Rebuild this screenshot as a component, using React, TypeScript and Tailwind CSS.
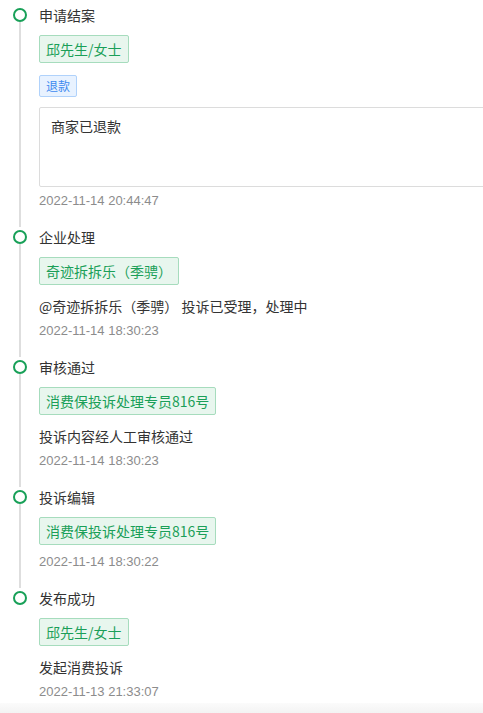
import React from "react";

type Item = {
  title: string;
  tag: string;
  extraTag?: string;
  box?: string;
  desc?: string;
  time: string;
};

const items: Item[] = [
  { title: "申请结案", tag: "邱先生/女士", extraTag: "退款", box: "商家已退款", time: "2022-11-14 20:44:47" },
  { title: "企业处理", tag: "奇迹拆拆乐（季骋）", desc: "@奇迹拆拆乐（季骋） 投诉已受理，处理中", time: "2022-11-14 18:30:23" },
  { title: "审核通过", tag: "消费保投诉处理专员816号", desc: "投诉内容经人工审核通过", time: "2022-11-14 18:30:23" },
  { title: "投诉编辑", tag: "消费保投诉处理专员816号", time: "2022-11-14 18:30:22" },
  { title: "发布成功", tag: "邱先生/女士", desc: "发起消费投诉", time: "2022-11-13 21:33:07" },
];

const cjk = { fontFamily: '"Microsoft YaHei", "Noto Sans CJK SC", "Liberation Sans", sans-serif' };
const num = { fontFamily: '"Liberation Sans", Arial, "Noto Sans CJK SC", sans-serif' };

export default function App() {
  return (
    <div className="w-[483px] h-[713px] overflow-hidden bg-white flex flex-col" style={cjk}>
      <div className="pt-[5px] flex flex-col">
        {items.map((it, i) => {
          const last = i === items.length - 1;
          return (
            <div key={i} className="flex">
              <div className="w-[39px] shrink-0 flex flex-col items-center pt-[3px]">
                <div className="w-[14px] h-[14px] rounded-full border-[2.5px] border-[#18a058] bg-white shrink-0" />
                {!last && <div className="w-[2px] flex-1 bg-[#dedede]" />}
              </div>
              <div className={`flex flex-col items-start ${last ? "" : "pb-[17px]"}`}>
                <div className="text-[14px] leading-[20px] text-[#333]">{it.title}</div>
                <div className="mt-[10px] h-[28px] px-[6px] border border-[#a6dcbd] bg-[#e8f6ee] rounded-[2px] text-[14px] leading-[26px] text-[#1a9f58] whitespace-nowrap">
                  {it.tag}
                </div>
                {it.extraTag && (
                  <div className="mt-[12px] h-[22px] px-[6px] border border-[#b0d2fb] bg-[#e8f2ff] rounded-[2px] text-[12px] leading-[20px] text-[#3d8af0]">
                    {it.extraTag}
                  </div>
                )}
                {it.box && (
                  <div className="mt-[10px] w-[470px] h-[80px] border border-[#dcdcdc] rounded-[2px] pt-[8px] px-[11px] text-[14px] leading-[20px] text-[#333]">
                    {it.box}
                  </div>
                )}
                {it.desc && (
                  <div className="mt-[11px] text-[14px] leading-[20px] text-[#333] whitespace-nowrap">{it.desc}</div>
                )}
                <div
                  className={`${it.box ? "mt-[5px]" : it.desc ? "mt-[6px]" : "mt-[8px]"} text-[13px] leading-[18px] text-[#8c8c8c]`}
                  style={num}
                >
                  {it.time}
                </div>
              </div>
            </div>
          );
        })}
      </div>
      <div className="flex-1 mt-[2px] bg-gradient-to-b from-[#fbfbfb] to-[#f3f3f3]" />
    </div>
  );
}
